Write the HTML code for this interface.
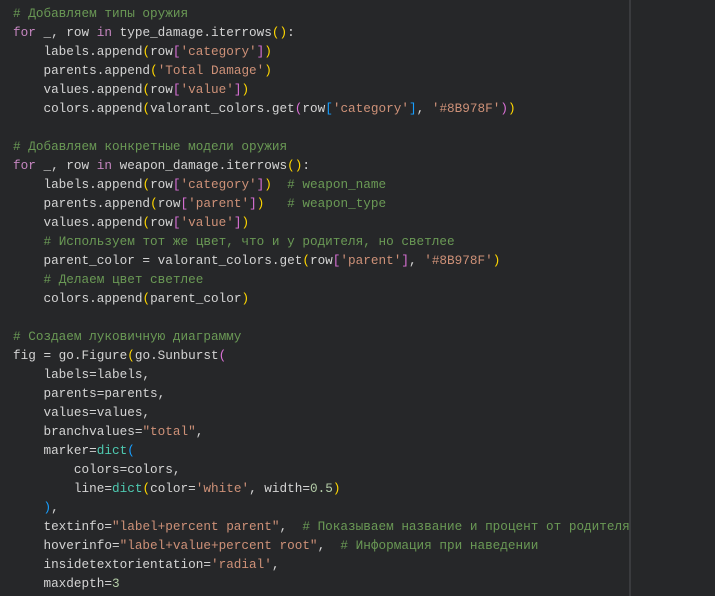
<!DOCTYPE html>
<html><head><meta charset="utf-8"><style>
html,body{margin:0;padding:0;background:#262729;width:715px;height:596px;overflow:hidden}
pre{margin:0;position:absolute;left:13px;top:4px;font-family:"Liberation Mono","DejaVu Sans Mono",monospace;font-size:12.7px;line-height:19px;color:#d4d4d4;white-space:pre}
.c{color:#6a9955}.k{color:#c586c0}.s{color:#ce9178}.y{color:#ffd700}.m{color:#da70d6}.b{color:#179fff}.t{color:#4ec9b0}.n{color:#b5cea8}
.v{position:absolute;left:629px;top:0;width:2px;height:596px;background:#3a3b3e}
</style></head><body>
<pre><span class="c"># Добавляем типы оружия</span>
<span class="k">for</span> _, row <span class="k">in</span> type_damage.iterrows<span class="y">()</span>:
    labels.append<span class="y">(</span>row<span class="m">[</span><span class="s">'category'</span><span class="m">]</span><span class="y">)</span>
    parents.append<span class="y">(</span><span class="s">'Total Damage'</span><span class="y">)</span>
    values.append<span class="y">(</span>row<span class="m">[</span><span class="s">'value'</span><span class="m">]</span><span class="y">)</span>
    colors.append<span class="y">(</span>valorant_colors.get<span class="m">(</span>row<span class="b">[</span><span class="s">'category'</span><span class="b">]</span>, <span class="s">'#8B978F'</span><span class="m">)</span><span class="y">)</span>

<span class="c"># Добавляем конкретные модели оружия</span>
<span class="k">for</span> _, row <span class="k">in</span> weapon_damage.iterrows<span class="y">()</span>:
    labels.append<span class="y">(</span>row<span class="m">[</span><span class="s">'category'</span><span class="m">]</span><span class="y">)</span>  <span class="c"># weapon_name</span>
    parents.append<span class="y">(</span>row<span class="m">[</span><span class="s">'parent'</span><span class="m">]</span><span class="y">)</span>   <span class="c"># weapon_type</span>
    values.append<span class="y">(</span>row<span class="m">[</span><span class="s">'value'</span><span class="m">]</span><span class="y">)</span>
    <span class="c"># Используем тот же цвет, что и у родителя, но светлее</span>
    parent_color = valorant_colors.get<span class="y">(</span>row<span class="m">[</span><span class="s">'parent'</span><span class="m">]</span>, <span class="s">'#8B978F'</span><span class="y">)</span>
    <span class="c"># Делаем цвет светлее</span>
    colors.append<span class="y">(</span>parent_color<span class="y">)</span>

<span class="c"># Создаем луковичную диаграмму</span>
fig = go.Figure<span class="y">(</span>go.Sunburst<span class="m">(</span>
    labels=labels,
    parents=parents,
    values=values,
    branchvalues=<span class="s">"total"</span>,
    marker=<span class="t">dict</span><span class="b">(</span>
        colors=colors,
        line=<span class="t">dict</span><span class="y">(</span>color=<span class="s">'white'</span>, width=<span class="n">0.5</span><span class="y">)</span>
    <span class="b">)</span>,
    textinfo=<span class="s">"label+percent parent"</span>,  <span class="c"># Показываем название и процент от родителя</span>
    hoverinfo=<span class="s">"label+value+percent root"</span>,  <span class="c"># Информация при наведении</span>
    insidetextorientation=<span class="s">'radial'</span>,
    maxdepth=<span class="n">3</span></pre>
<div class="v"></div>
</body></html>
